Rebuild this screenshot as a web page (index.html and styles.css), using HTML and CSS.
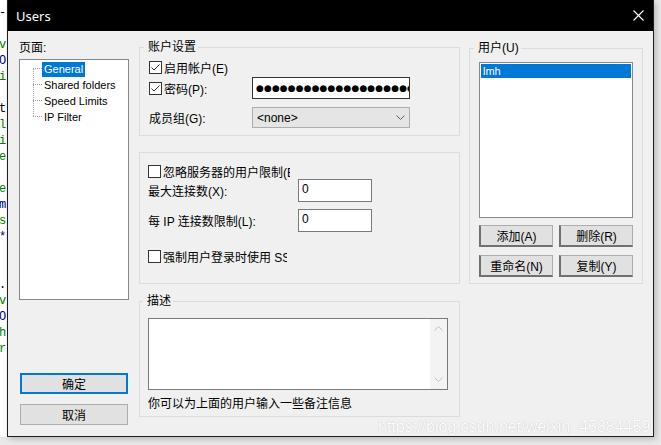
FILE: index.html
```
<!DOCTYPE html>
<html lang="zh-CN">
<head>
  <meta charset="UTF-8">
  <title>Users</title>
  <link rel="stylesheet" href="styles.css">
</head>
<body>
  <div class="code">
    <div class="ln k">-</div>
    <div class="ln"></div>
    <div class="ln g">v:</div>
    <div class="ln n">O'</div>
    <div class="ln g">i:</div>
    <div class="ln"></div>
    <div class="ln k">t:</div>
    <div class="ln g">l:</div>
    <div class="ln g">i:</div>
    <div class="ln g">e:</div>
    <div class="ln"></div>
    <div class="ln g">e:</div>
    <div class="ln n">ml</div>
    <div class="ln g">s:</div>
    <div class="ln n">*:</div>
    <div class="ln"></div>
    <div class="ln"></div>
    <div class="ln k">.</div>
    <div class="ln g">v:</div>
    <div class="ln n">O'</div>
    <div class="ln g">h:</div>
    <div class="ln g">r:</div>
  </div>

  <div class="window">
    <div class="titlebar">
      <span class="title">Users</span>
      <svg class="close" width="11" height="11" viewBox="0 0 11 11">
        <path d="M0.5 0.5 L10.5 10.5 M10.5 0.5 L0.5 10.5" stroke="#fff" stroke-width="1.1" fill="none"/>
      </svg>
    </div>

    <div class="client">
      <!-- page tree + dialog buttons -->
      <div class="col-nav">
        <div class="nav-label">页面:</div>
        <div class="tree">
          <div class="tree-item first"><span class="branch"></span><span class="node selected">General</span></div>
          <div class="tree-item"><span class="branch"></span><span class="node">Shared folders</span></div>
          <div class="tree-item"><span class="branch"></span><span class="node">Speed Limits</span></div>
          <div class="tree-item last"><span class="branch"></span><span class="node">IP Filter</span></div>
        </div>
        <div class="dlg-buttons">
          <button class="btn btn-default">确定</button>
          <button class="btn">取消</button>
        </div>
      </div>

      <!-- settings -->
      <div class="col-main">
        <fieldset class="group group-account">
          <legend>账户设置</legend>
          <div class="form-row row-a1">
            <span class="check"><svg width="13" height="13" viewBox="0 0 13 13"><rect x="0.5" y="0.5" width="12" height="12" fill="#fff" stroke="#333"/><path d="M2.5 6.5 L5 9 L10.5 3.5" stroke="#333" fill="none"/></svg></span>
            <span>启用帐户(E)</span>
          </div>
          <div class="form-row row-a2">
            <span class="cell-a">
              <span class="check"><svg width="13" height="13" viewBox="0 0 13 13"><rect x="0.5" y="0.5" width="12" height="12" fill="#fff" stroke="#333"/><path d="M2.5 6.5 L5 9 L10.5 3.5" stroke="#333" fill="none"/></svg></span>
              <span>密码(P):</span>
            </span>
            <div class="password">●●●●●●●●●●●●●●●●●●●●●●●●●●●●●●</div>
          </div>
          <div class="form-row row-a3">
            <span class="cell-a">成员组(G):</span>
            <div class="select">
              <span>&lt;none&gt;</span>
              <svg width="9" height="5" viewBox="0 0 9 5"><path d="M0.5 0.5 L4.5 4.5 L8.5 0.5" stroke="#606060" fill="none"/></svg>
            </div>
          </div>
        </fieldset>

        <fieldset class="group group-limits">
          <div class="form-row row-l1">
            <span class="check"><svg width="13" height="13" viewBox="0 0 13 13"><rect x="0.5" y="0.5" width="12" height="12" fill="#fff" stroke="#333"/></svg></span>
            <span class="clip clip-a">忽略服务器的用户限制(B)</span>
          </div>
          <div class="form-row row-l2">
            <span class="cell-l">最大连接数(X):</span>
            <input class="num" type="text" value="0">
          </div>
          <div class="form-row row-l3">
            <span class="cell-l">每 IP 连接数限制(L):</span>
            <input class="num" type="text" value="0">
          </div>
          <div class="form-row row-l4">
            <span class="check"><svg width="13" height="13" viewBox="0 0 13 13"><rect x="0.5" y="0.5" width="12" height="12" fill="#fff" stroke="#333"/></svg></span>
            <span class="clip clip-b">强制用户登录时使用 SSL</span>
          </div>
        </fieldset>

        <fieldset class="group group-desc">
          <legend>描述</legend>
          <div class="memo">
            <div class="memo-text"></div>
            <div class="scrollbar">
              <svg width="9" height="5" viewBox="0 0 9 5"><path d="M0.5 4.5 L4.5 0.5 L8.5 4.5" stroke="#c2c2c2" fill="none"/></svg>
              <svg width="9" height="5" viewBox="0 0 9 5"><path d="M0.5 0.5 L4.5 4.5 L8.5 0.5" stroke="#c2c2c2" fill="none"/></svg>
            </div>
          </div>
          <div class="hint">你可以为上面的用户输入一些备注信息</div>
        </fieldset>
      </div>

      <!-- user list -->
      <div class="col-users">
        <fieldset class="group group-users">
          <legend>用户(U)</legend>
          <div class="listbox">
            <div class="list-item selected">lmh</div>
          </div>
          <div class="user-buttons">
            <button class="btn btn-user">添加(A)</button>
            <button class="btn btn-user">删除(R)</button>
            <button class="btn btn-user">重命名(N)</button>
            <button class="btn btn-user">复制(Y)</button>
          </div>
        </fieldset>
      </div>
    </div>
  </div>

  <div class="watermark">https://blog.csdn.net/weixin_45884459</div>
</body>
</html>
```

FILE: styles.css
```
* { box-sizing: border-box; }
body { margin: 0; width: 661px; height: 445px; overflow: hidden; position: relative; display: flex; align-items: flex-start; background: #e9e9e9; font-family: "Liberation Sans", "Noto Sans CJK SC", sans-serif; font-size: 12px; color: #000; }

/* page behind the dialog */
.code { width: 7px; height: 437px; flex: none; overflow: hidden; background: #fff; padding-top: 5px; font: 12px/16px "Liberation Mono", monospace; }
.ln { height: 16px; white-space: pre; margin-left: -1px; }
.ln.g { color: #008000; }
.ln.n { color: #000080; }
.ln.k { color: #000; }

.window { width: 647px; height: 437px; flex: none; display: flex; flex-direction: column; background: #f0f0f0; border: 1px solid #1e1e1e; border-top: 0; box-shadow: 2px 2px 6px rgba(0, 0, 0, 0.22); }
.titlebar { height: 31px; flex: none; background: #000; color: #fff; display: flex; align-items: center; justify-content: space-between; padding: 0 9px 0 8px; }
.title { font: 13px "Noto Sans", sans-serif; }
.close { display: block; margin-top: -1px; }

.client { flex: 1; display: flex; padding: 0 10px 0 11px; }
.col-nav { width: 110px; display: flex; flex-direction: column; padding: 9px 0 11px; }
.col-main { width: 321px; margin-left: 10px; display: flex; flex-direction: column; }
.col-users { width: 174px; margin-left: 9px; }

.nav-label { line-height: 16px; margin-bottom: 3px; }
.tree { height: 241px; background: #fff; border: 1px solid #828790; padding: 1px 0; font-size: 11px; }
.tree-item { height: 16px; display: flex; align-items: center; padding-left: 13px; }
.branch { width: 9px; height: 16px; flex: none; background:
  repeating-linear-gradient(to right, #a0a0a0 0 1px, transparent 1px 2px) 0 7px / 9px 1px no-repeat,
  repeating-linear-gradient(to bottom, #a0a0a0 0 1px, transparent 1px 2px) 0 0 / 1px 16px no-repeat; }
.tree-item.first .branch { background:
  repeating-linear-gradient(to right, #a0a0a0 0 1px, transparent 1px 2px) 0 7px / 9px 1px no-repeat,
  repeating-linear-gradient(to bottom, #a0a0a0 0 1px, transparent 1px 2px) 0 8px / 1px 8px no-repeat; }
.tree-item.last .branch { background:
  repeating-linear-gradient(to right, #a0a0a0 0 1px, transparent 1px 2px) 0 7px / 9px 1px no-repeat,
  repeating-linear-gradient(to bottom, #a0a0a0 0 1px, transparent 1px 2px) 0 0 / 1px 8px no-repeat; }
.node { padding: 1px 2px; line-height: 13px; white-space: nowrap; }
.node.selected { background: #0078d7; color: #fff; }

.dlg-buttons { margin-top: auto; display: flex; flex-direction: column; gap: 10px; padding: 0 1px; }
.btn { height: 21px; padding: 0; background: #e1e1e1; border: 1px solid #adadad; font: 12px "Liberation Sans", "Noto Sans CJK SC", sans-serif; color: #000; }
.btn-default { border: 2px solid #0078d7; }

/* group boxes */
.group { margin: 0; border: 1px solid #dcdcdc; min-width: 0; }
.group legend { padding: 0 2px 0 4px; margin-left: -5px; line-height: 16px; }
.form-row { display: flex; align-items: center; }
.check { width: 13px; height: 13px; flex: none; margin-right: 2px; display: block; }
.check svg { display: block; }
.cell-a { width: 103px; flex: none; display: flex; align-items: center; }
.cell-l { width: 150px; flex: none; }

.group-account { margin-top: 8px; padding: 3px 9px 7px; }
.row-a1 { height: 19px; }
.row-a2 { height: 22px; }
.row-a3 { height: 21px; margin-top: 8px; }
.password { width: 158px; height: 22px; border: 1px solid #333; background: #fff; overflow: hidden; white-space: nowrap; padding-left: 3px; font: 9px/20px "DejaVu Sans", sans-serif; letter-spacing: 0.1px; }
.select { width: 158px; height: 21px; border: 1px solid #adadad; background: #e5e5e5; display: flex; align-items: center; justify-content: space-between; padding: 0 4px 0 4px; }

.group-limits { margin-top: 16px; padding: 11px 8px 18px; }
.row-l1 { height: 15px; }
.row-l2 { height: 23px; }
.row-l3 { height: 23px; margin-top: 7px; }
.row-l4 { height: 18px; margin-top: 15px; }
.clip { overflow: hidden; white-space: nowrap; }
.clip-a { width: 127px; }
.clip-b { width: 124px; }
.num { width: 74px; height: 23px; border: 1px solid #7a7a7a; background: #fff; padding: 0 3px 4px; font: 12px "Liberation Sans", sans-serif; color: #000; outline: none; }

.group-desc { margin-top: 9px; padding: 9px 8px 4px; }
.memo { width: 300px; height: 72px; border: 1px solid #7a7a7a; background: #fff; display: flex; }
.memo-text { flex: 1; }
.scrollbar { width: 17px; background: #f3f3f3; display: flex; flex-direction: column; justify-content: space-between; align-items: center; padding: 7px 0 7px; }
.scrollbar svg { display: block; }
.hint { margin-top: 6px; line-height: 16px; }

.group-users { margin-top: 9px; padding: 6px 9px 6px; }
.listbox { width: 154px; height: 156px; border: 1px solid #828790; background: #fff; padding: 1px; }
.list-item { height: 14px; line-height: 14px; padding-left: 2px; font-size: 11px; }
.list-item.selected { background: #0078d7; color: #fff; }
.user-buttons { margin-top: 7px; display: grid; grid-template-columns: 74px 74px; gap: 8px 6px; }
.btn-user { height: 22px; border-left: 2px solid #707070; border-bottom: 2px solid #707070; }

.watermark { position: absolute; left: 378px; top: 418px; font: 16px "Liberation Sans", sans-serif; color: #fdfdfd; text-shadow: 0 0 1px #b4b4b4; white-space: nowrap; }
```
